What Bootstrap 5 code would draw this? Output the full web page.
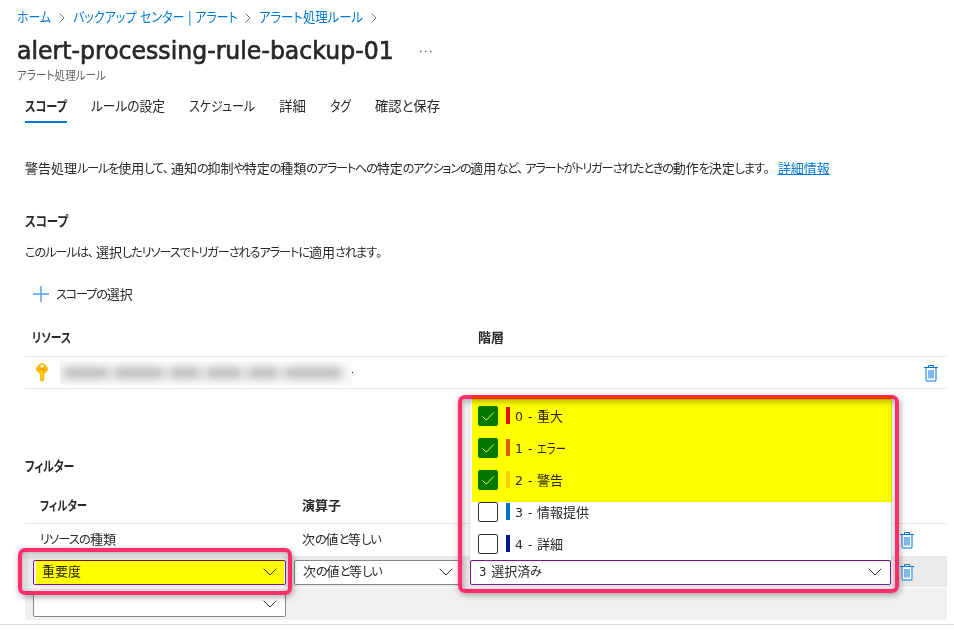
<!DOCTYPE html>
<html lang="ja">
<head>
<meta charset="utf-8">
<meta name="viewport" content="width=device-width, initial-scale=1">
<title>alert-processing-rule-backup-01</title>
<link href="https://cdn.jsdelivr.net/npm/bootstrap@5.3.0/dist/css/bootstrap.min.css" rel="stylesheet">
<script src="https://cdn.jsdelivr.net/npm/bootstrap@5.3.0/dist/js/bootstrap.bundle.min.js" defer></script>
<style>
body{font-family:"DejaVu Sans Condensed","Noto Sans CJK JP",sans-serif;font-size:13px;line-height:20px;color:#292827;font-feature-settings:"palt";height:630px;overflow:hidden;background:#fff}
.main span,.crumbs a,h1,p{white-space:nowrap}
a{color:#0078d4}
h1,h2,p{margin:0}
/* condensed text: --w is the drawn width, --s the horizontal scale */
.fit{display:inline-block;width:var(--w);transform:scaleX(var(--s));transform-origin:0 50%;white-space:nowrap}
.crumbs{height:34px;padding-left:17px}
.crumbs a{text-decoration:none;font-size:13.5px}
.chev{margin:1px 8px 0 7px}
.c1{--w:35px;--s:.88}.c2{--w:165px;--s:.893}.c3{--w:105px;--s:.916}
.title-row{height:34px;padding-left:17px}
.title-row h1{--w:376px;--s:.963;font-family:"DejaVu Sans",sans-serif;font-size:24.5px;font-weight:400;line-height:34px;-webkit-text-stroke:.7px #292827}
.dots{margin-left:27px}
.subtitle{height:16px;padding-left:17px;font-size:12px;line-height:16px;color:#605e5c}
.sub{--w:89px;--s:.882}
.main{padding-left:25px;width:947px}
.tabs{height:33px;margin-top:6px;gap:24px;font-size:13.5px;line-height:32px}
.tabs .current{border-bottom:2px solid #0078d4;width:42px}
.t1{--w:42px;--s:.828;font-weight:700}.t2{--w:74px;--s:.941}.t3{--w:66px;--s:.887}.t4{--w:27px;--s:1}.t5{--w:21px;--s:.875}.t6{--w:65px;--s:.986}
.intro{margin-top:36px;height:20px}
.intro a{margin-left:6px}
.k{font-size:.94em}
.intro .k{letter-spacing:-1.27px}
.intro .c,.desc .c{letter-spacing:2px}
h2{font-size:14px;font-weight:700;line-height:20px}
.h-scope{margin-top:32px}
.s1{--w:43px;--s:.82}.s2{--w:39px;--s:.828}.s3{--w:49px;--s:.78}.s4{--w:47px;--s:.8}.s5{--w:29px;--s:.79}
.desc{margin-top:12px}
.desc .k{letter-spacing:-1.11px}
.add{margin-top:21px;padding-left:8px;height:20px}
.add svg{margin:-1px 7px 0 0}
.add span{padding-top:1px}
.add .k,.flt-row .k{letter-spacing:-1.25px}
.flt-row .type .k{letter-spacing:-.86px}
.hd{font-weight:700}
.res-row{display:grid;grid-template-columns:446px 1fr 17px;align-items:center;border-bottom:1px solid #e9e9e9;padding:0 6px 0 7px;height:32px}
.res-row .trash{margin-top:2px}
.res-head{margin-top:15px;height:38px;padding-top:1px}
.res-name{padding-left:4px}
.h-filter{margin-top:67px}
.flt-row{display:grid;grid-template-columns:253px 168px 421px 1fr;column-gap:8px;align-items:center;padding-left:8px;height:32px}
.flt-head{margin-top:11px;height:37px;border-bottom:1px solid #e9e9e9;padding-top:1px}
.flt-row>.txt{padding-left:7px}
.bin{margin-left:1px}
.active-row{background:#ebeae9}
.new-row{background:#f2f1f0;border-top:1px solid #fff;height:33px;margin-top:-1px}
.pick{height:25px;border:1px solid #8a8886;border-radius:2px;background:#fff;padding:0 8px}
.pick.focus{border-color:#881798}
.pick .count{word-spacing:1px}
.frame{position:absolute;border:4px solid #ff2d6b;border-radius:7px;box-shadow:1px 2px 6px rgba(0,0,0,.35),inset 1px 2px 7px rgba(0,0,0,.35);z-index:5}
.frame-a{left:-15px;top:-8px;width:274px;height:47px}
.frame-b{left:-12px;top:-161px;width:441px;height:198px}
.marker{position:absolute;background:#ff0;mix-blend-mode:multiply;z-index:6}
.marker-a{left:3px;top:4px;width:248px;height:24px}
.marker-b{left:2px;top:-160px;width:420px;height:106px}
.menu{position:absolute;left:0;top:-156px;width:421px;height:160px;background:#fff;z-index:3;box-shadow:0 0 3px rgba(0,0,0,.25)}
.opt{height:32px;padding-left:8px;font-family:"DejaVu Sans","Noto Sans CJK JP",sans-serif}
.opt span{padding-top:1px}
.opt .n{font-size:12.5px;white-space:pre;width:22px;word-spacing:1px}
.box{width:20px;height:20px;border:1px solid #323130;border-radius:2px;margin-right:8px}
.box.on{background:#0078d4;border-color:#0078d4}
.bar{width:4px;height:17px;margin:-1px 5px 0 0}
.b0{background:#e81123}.b1{background:#e05a00}.b2{background:#fcd116}.b3{background:#0072c6}.b4{background:#00188f}
.smear{width:292px;height:24px;background:#fafafa;margin-left:12px;padding-left:3px;gap:5px;overflow:hidden}
.smear i{height:10px;background:#888;filter:blur(5px);opacity:.62}
.speck{width:1px;height:1px;background:#123}
.end-line{margin-top:4px;border-top:1px solid #ddd}
</style>
</head>
<body>
<svg class="d-none">
<symbol id="gt" viewBox="0 0 6 12"><path d="M.5 1.500 5 6 .5 10.500" fill="none" stroke="#777"/></symbol>
<symbol id="down" viewBox="0 0 14 8"><path d="M.7.7 7 7 13.300.7" fill="none" stroke="#323130"/></symbol>
<symbol id="trash" viewBox="0 0 14 17"><path d="M2 3h10v12.500H2z" fill="#fff"/><path d="M2 3v12.500M12 3v12.500" stroke="#7db9ea" stroke-width="2"/><path d="M4 5h6v8.500H4z" fill="#7db9ea"/><path d="M0 2.500h14M2 16h10M4.500 2V.5h5V2" fill="none" stroke="#0078d4"/></symbol>
<symbol id="tick" viewBox="0 0 18 18"><path d="m3.500 9.500 3.700 3.700L14.800 5.500" fill="none" stroke="#fff"/></symbol>
</svg>
<nav class="crumbs d-flex align-items-center">
<a href="#" class="fit c1">ホーム</a><svg class="chev" width="6" height="12"><use href="#gt"/></svg>
<a href="#" class="fit c2">バックアップ センター | アラート</a><svg class="chev" width="6" height="12"><use href="#gt"/></svg>
<a href="#" class="fit c3">アラート処理ルール</a><svg class="chev" width="6" height="12"><use href="#gt"/></svg>
</nav>
<header>
<div class="title-row d-flex align-items-center"><h1 class="fit">alert-processing-rule-backup-01</h1><svg class="dots" width="12" height="3"><path d="M0 1.500h1.500M5 1.500h1.500M10 1.500h1.500" stroke="#666" stroke-width="1.500"/></svg></div>
<div class="subtitle"><span class="fit sub">アラート処理ルール</span></div>
</header>
<main class="main">
<div class="tabs d-flex"><div class="current"><span class="fit t1">スコープ</span></div><span class="fit t2">ルールの設定</span><span class="fit t3">スケジュール</span><span class="fit t4">詳細</span><span class="fit t5">タグ</span><span class="fit t6">確認と保存</span></div>
<p class="intro">警告処理<span class="k">ルールを</span>使用<span class="k">して<span class="c">、</span></span>通知<span class="k">の</span>抑制<span class="k">や</span>特定<span class="k">の</span>種類<span class="k">のアラートへの</span>特定<span class="k">のアクションの</span>適用<span class="k">など<span class="c">、</span>アラートがトリガーされたときの</span>動作<span class="k">を</span>決定<span class="k">します<span class="c">。</span></span><a href="#">詳細情報</a></p>
<h2 class="h-scope"><span class="fit s1">スコープ</span></h2>
<p class="desc"><span class="k">このルールは<span class="c">、</span></span>選択<span class="k">したリソースでトリガーされるアラートに</span>適用<span class="k">されます<span class="c">。</span></span></p>
<div class="add d-flex align-items-center"><svg width="16" height="16"><path d="M8 0v16M0 8h16" stroke="#4ea0e2" stroke-width="1.400"/></svg><span><span class="k">スコープの</span>選択</span></div>
<div class="res-row res-head hd"><span class="fit s2">リソース</span><span>階層</span></div>
<div class="res-row">
<div class="res-name d-flex align-items-center"><svg width="12" height="19"><path d="M6 0Q8 0 11 3.500Q13 6 11 8.500L8.200 11V17L6 19 4 17V11L1 8.500Q-1 6 1 3.500 4 0 6 0Z" fill="#fdb813"/><path d="M4.500 8h2v9.500l-1-.8z" fill="#ffdc00"/><circle cx="6" cy="3" r="1.500" fill="#fff"/><path d="M2.500 6.200h7" stroke="#f39a00"/></svg>
<div class="smear d-flex align-items-center"><i style="width:46px"></i><i style="width:50px"></i><i style="width:32px"></i><i style="width:36px"></i><i style="width:32px"></i><i style="width:58px"></i></div><span class="speck"></span></div>
<span></span><svg class="trash" width="14" height="17"><use href="#trash"/></svg></div>
<h2 class="h-filter"><span class="fit s3">フィルター</span></h2>
<div class="flt-row flt-head hd"><div class="txt"><span class="fit s4">フィルター</span></div><div><span class="ms-2">演算子</span></div></div>
<div class="flt-row"><div class="txt type"><span><span class="k">リソースの</span>種類</span></div><div><span class="ms-2">次<span class="k">の</span>値<span class="k">と</span>等<span class="k">しい</span></span></div><div></div><svg class="bin" width="14" height="17"><use href="#trash"/></svg></div>
<div class="flt-row active-row">
<div class="position-relative h-100 d-flex align-items-center"><div class="pick focus w-100 d-flex align-items-center justify-content-between"><span>重要度</span><svg width="14" height="8"><use href="#down"/></svg></div><div class="frame frame-a"></div><div class="marker marker-a"></div></div>
<div class="pick d-flex align-items-center justify-content-between"><span>次<span class="k">の</span>値<span class="k">と</span>等<span class="k">しい</span></span><svg width="14" height="8"><use href="#down"/></svg></div>
<div class="position-relative h-100 d-flex align-items-center"><div class="pick focus w-100 d-flex align-items-center justify-content-between"><span class="count">3 選択済<span class="k">み</span></span><svg width="14" height="8"><use href="#down"/></svg></div>
<div class="menu">
<div class="opt d-flex align-items-center"><div class="box on"><svg class="d-block" width="18" height="18"><use href="#tick"/></svg></div><div class="bar b0"></div><span class="n">0 -</span><span>重大</span></div>
<div class="opt d-flex align-items-center"><div class="box on"><svg class="d-block" width="18" height="18"><use href="#tick"/></svg></div><div class="bar b1"></div><span class="n">1 -</span><span class="fit s5">エラー</span></div>
<div class="opt d-flex align-items-center"><div class="box on"><svg class="d-block" width="18" height="18"><use href="#tick"/></svg></div><div class="bar b2"></div><span class="n">2 -</span><span>警告</span></div>
<div class="opt d-flex align-items-center"><div class="box"></div><div class="bar b3"></div><span class="n">3 -</span><span>情報提供</span></div>
<div class="opt d-flex align-items-center"><div class="box"></div><div class="bar b4"></div><span class="n">4 -</span><span>詳細</span></div>
</div>
<div class="frame frame-b"></div><div class="marker marker-b"></div></div>
<svg class="bin" width="14" height="17"><use href="#trash"/></svg></div>
<div class="flt-row new-row"><div class="pick d-flex align-items-center justify-content-end"><svg width="14" height="8"><use href="#down"/></svg></div></div>
</main>
<div class="end-line"></div>
</body>
</html>
